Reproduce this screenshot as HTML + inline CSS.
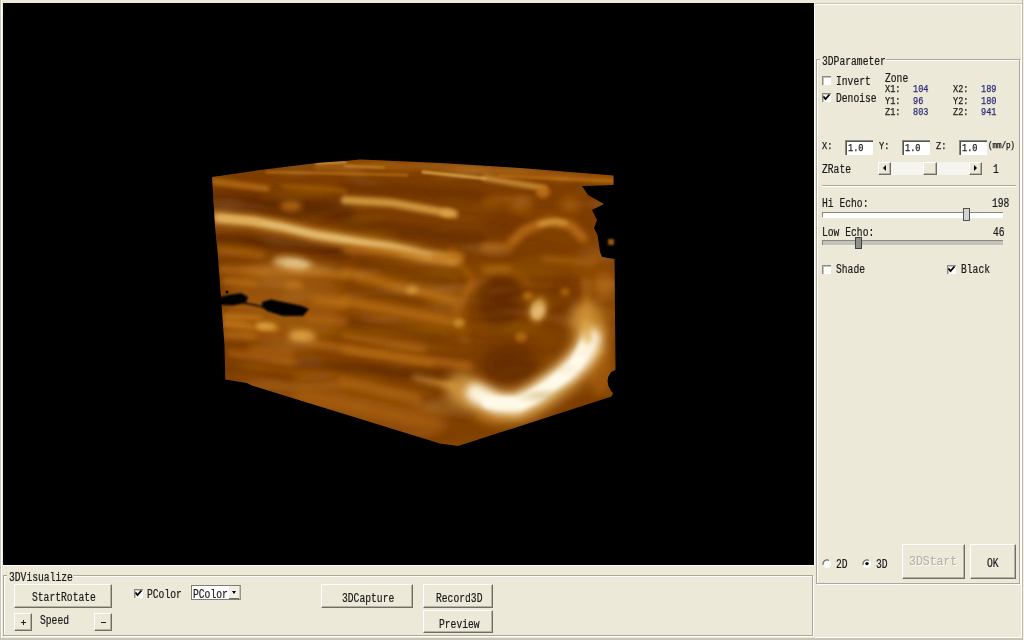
<!DOCTYPE html>
<html><head><meta charset="utf-8">
<style>
html,body{margin:0;padding:0;}
body{width:1024px;height:640px;position:relative;overflow:hidden;background:#ECE9D8;font-family:"Liberation Mono",monospace;color:#181818;}
.a{position:absolute;}
.t{position:absolute;font-size:12px;line-height:12px;white-space:nowrap;transform:scaleX(.806);transform-origin:0 0;-webkit-text-stroke:0.2px currentColor;}
.btn{position:absolute;background:#ECE9D8;border-top:1px solid #fff;border-left:1px solid #fff;border-right:1px solid #716F64;border-bottom:1px solid #716F64;box-shadow:inset -1px -1px 0 #B5B2A4;box-sizing:border-box;}
.cb{position:absolute;width:9px;height:9px;background:#fff;box-shadow:inset 1px 1px 0 #8c8a7e, inset 2px 2px 0 #c8c6ba;}
.edit{position:absolute;background:#fff;box-shadow:inset 1px 1px 0 #8c8a7e, inset 2px 2px 0 #55544c;box-sizing:border-box;}
.ts{position:absolute;font-size:10px;line-height:10px;white-space:nowrap;transform:scaleX(.86);transform-origin:0 0;-webkit-text-stroke:0.25px currentColor;}
</style></head><body>
<!-- window edges -->
<div class="a" style="left:0;top:0;width:1px;height:640px;background:#ACA899"></div>
<div class="a" style="left:1px;top:1px;width:1px;height:638px;background:#fff"></div>
<!-- black view -->
<div class="a" style="left:3px;top:3px;width:811px;height:562px;background:#000;overflow:hidden">
<svg width="811" height="562" viewBox="3 3 811 562" style="position:absolute;left:0;top:0">
  <defs>
    <filter id="texL" filterUnits="userSpaceOnUse" x="200" y="150" width="420" height="300">
      <feTurbulence type="fractalNoise" baseFrequency="0.012 0.05" numOctaves="2" seed="7"/>
      <feColorMatrix type="matrix" values="0 0 0 0 0.82  0 0 0 0 0.55  0 0 0 0 0.2  4 0 0 0 -2.2"/>
      <feGaussianBlur stdDeviation="2"/>
    </filter>
    <filter id="texD" filterUnits="userSpaceOnUse" x="200" y="150" width="420" height="300">
      <feTurbulence type="fractalNoise" baseFrequency="0.012 0.05" numOctaves="2" seed="7"/>
      <feColorMatrix type="matrix" values="0 0 0 0 0.35  0 0 0 0 0.15  0 0 0 0 0  -4 0 0 0 1.8"/>
      <feGaussianBlur stdDeviation="2"/>
    </filter>
    <filter id="b6" filterUnits="userSpaceOnUse" x="0" y="0" width="1024" height="640"><feGaussianBlur stdDeviation="6"/></filter>
    <filter id="b8" filterUnits="userSpaceOnUse" x="0" y="0" width="1024" height="640"><feGaussianBlur stdDeviation="8"/></filter>
    <filter id="b10" filterUnits="userSpaceOnUse" x="0" y="0" width="1024" height="640"><feGaussianBlur stdDeviation="10"/></filter>
    <filter id="soft" filterUnits="userSpaceOnUse" x="0" y="0" width="1024" height="640"><feGaussianBlur stdDeviation="0.7"/></filter>
    <filter id="b1" filterUnits="userSpaceOnUse" x="0" y="0" width="1024" height="640"><feGaussianBlur stdDeviation="1"/></filter>
    <filter id="b2" filterUnits="userSpaceOnUse" x="0" y="0" width="1024" height="640"><feGaussianBlur stdDeviation="2"/></filter>
    <filter id="b3" filterUnits="userSpaceOnUse" x="0" y="0" width="1024" height="640"><feGaussianBlur stdDeviation="3"/></filter>
    <filter id="b4" filterUnits="userSpaceOnUse" x="0" y="0" width="1024" height="640"><feGaussianBlur stdDeviation="4"/></filter>
    <filter id="b5" filterUnits="userSpaceOnUse" x="0" y="0" width="1024" height="640"><feGaussianBlur stdDeviation="5"/></filter>
    <clipPath id="blk"><path d="M212,177 L260,170 L317,163 L345,161 L360,159.5 L440,163 L520,168 L613.5,175.5 L613.5,185 L582,186 L588,195 L604,204 L592,210 L597,220 L594,228 L597.5,235 L600,252 L602,257 L614.5,259 L615.5,370 L611,372 Q604,381 611,391 L613,393 L611.6,396.6 L458,446 L440,443.5 L252,385.6 L247,383 L225.3,379.4 L224.5,345 L217.5,250 L215.3,230 L213.5,200 Z"/></clipPath>
  </defs>
  <g filter="url(#soft)"><g clip-path="url(#blk)">
    <rect x="200" y="150" width="420" height="300" fill="rgb(126,62,3)"/>
<ellipse cx="405" cy="300" rx="60" ry="45" fill="rgb(155,88,10)" opacity="0.7" filter="url(#b8)" transform="rotate(12 405 300)"/>
<ellipse cx="595" cy="300" rx="25" ry="60" fill="rgb(155,88,10)" opacity="0.5" filter="url(#b8)" transform="rotate(0 595 300)"/>
<ellipse cx="340" cy="395" rx="110" ry="30" fill="rgb(188,112,18)" opacity="0.35" filter="url(#b10)" transform="rotate(16 340 395)"/>
<path d="M300,395 L440,425" stroke="rgb(188,112,18)" stroke-width="10" fill="none" stroke-linecap="round" stroke-linejoin="round" opacity="0.5" filter="url(#b5)"/>
<path d="M216,202 L260,204 L300,207 L345,212" stroke="rgb(98,42,0)" stroke-width="20" fill="none" stroke-linecap="round" stroke-linejoin="round" opacity="1.0" filter="url(#b4)"/>
<path d="M345,186 L400,190 L480,196" stroke="rgb(98,42,0)" stroke-width="10" fill="none" stroke-linecap="round" stroke-linejoin="round" opacity="0.6" filter="url(#b4)"/>
<path d="M345,225 L420,232 L480,240" stroke="rgb(98,42,0)" stroke-width="12" fill="none" stroke-linecap="round" stroke-linejoin="round" opacity="0.75" filter="url(#b4)"/>
<path d="M218,239 L260,242 L300,247 L345,254" stroke="rgb(98,42,0)" stroke-width="10" fill="none" stroke-linecap="round" stroke-linejoin="round" opacity="1.0" filter="url(#b3)"/>
<path d="M360,262 L447,280" stroke="rgb(98,42,0)" stroke-width="10" fill="none" stroke-linecap="round" stroke-linejoin="round" opacity="0.6" filter="url(#b4)"/>
<path d="M345,288 L423,302" stroke="rgb(98,42,0)" stroke-width="8" fill="none" stroke-linecap="round" stroke-linejoin="round" opacity="0.55" filter="url(#b4)"/>
<path d="M345,320 L439,338" stroke="rgb(98,42,0)" stroke-width="9" fill="none" stroke-linecap="round" stroke-linejoin="round" opacity="0.55" filter="url(#b4)"/>
<path d="M345,370 L415,376" stroke="rgb(98,42,0)" stroke-width="9" fill="none" stroke-linecap="round" stroke-linejoin="round" opacity="0.5" filter="url(#b4)"/>
<path d="M225,285 L300,292" stroke="rgb(112,50,0)" stroke-width="8" fill="none" stroke-linecap="round" stroke-linejoin="round" opacity="0.6" filter="url(#b4)"/>
<path d="M225,355 L300,365" stroke="rgb(112,50,0)" stroke-width="8" fill="none" stroke-linecap="round" stroke-linejoin="round" opacity="0.5" filter="url(#b4)"/>
<ellipse cx="500" cy="300" rx="22" ry="28" fill="rgb(98,42,0)" opacity="0.85" filter="url(#b5)" transform="rotate(0 500 300)"/>
<ellipse cx="510" cy="365" rx="28" ry="22" fill="rgb(98,42,0)" opacity="0.7" filter="url(#b5)" transform="rotate(0 510 365)"/>
<ellipse cx="567" cy="295" rx="18" ry="22" fill="rgb(112,50,0)" opacity="0.55" filter="url(#b5)" transform="rotate(0 567 295)"/>
<ellipse cx="505" cy="225" rx="22" ry="14" fill="rgb(112,50,0)" opacity="0.5" filter="url(#b5)" transform="rotate(0 505 225)"/>
<path d="M318,166 L420,166 L613,180" stroke="rgb(188,112,18)" stroke-width="9" fill="none" stroke-linecap="round" stroke-linejoin="round" opacity="0.45" filter="url(#b2)"/>
<path d="M317,163 L345,162" stroke="rgb(222,165,70)" stroke-width="3" fill="none" stroke-linecap="round" stroke-linejoin="round" opacity="0.7" filter="url(#b1)"/>
<path d="M267,172 L407,175" stroke="rgb(188,112,18)" stroke-width="3" fill="none" stroke-linecap="round" stroke-linejoin="round" opacity="0.7" filter="url(#b1)"/>
<path d="M423,172 L485,178.5" stroke="rgb(222,165,70)" stroke-width="3" fill="none" stroke-linecap="round" stroke-linejoin="round" opacity="0.9" filter="url(#b1)"/>
<path d="M485,178 L544,188" stroke="rgb(222,165,70)" stroke-width="5" fill="none" stroke-linecap="round" stroke-linejoin="round" opacity="0.85" filter="url(#b2)"/>
<path d="M345,166 L384,167.5" stroke="rgb(222,165,70)" stroke-width="2" fill="none" stroke-linecap="round" stroke-linejoin="round" opacity="0.6" filter="url(#b1)"/>
<path d="M500,176 L613,181" stroke="rgb(188,112,18)" stroke-width="3" fill="none" stroke-linecap="round" stroke-linejoin="round" opacity="0.7" filter="url(#b1)"/>
<path d="M214,181.5 L267,188.6" stroke="rgb(188,112,18)" stroke-width="6" fill="none" stroke-linecap="round" stroke-linejoin="round" opacity="0.85" filter="url(#b2)"/>
<path d="M283,186 L345,191" stroke="rgb(188,112,18)" stroke-width="4" fill="none" stroke-linecap="round" stroke-linejoin="round" opacity="0.5" filter="url(#b2)"/>
<ellipse cx="291" cy="206" rx="11" ry="5" fill="rgb(188,112,18)" opacity="0.85" filter="url(#b3)" transform="rotate(0 291 206)"/>
<path d="M345,200 L392,203 L454,214" stroke="rgb(222,165,70)" stroke-width="8" fill="none" stroke-linecap="round" stroke-linejoin="round" opacity="0.85" filter="url(#b2)"/>
<ellipse cx="447" cy="213" rx="7" ry="4" fill="rgb(222,165,70)" opacity="0.8" filter="url(#b2)" transform="rotate(0 447 213)"/>
<path d="M216,218 L252,221 L283,227 L314,234.5 L345,239.5 L392,247 L423,255 L455,260" stroke="rgb(222,165,70)" stroke-width="12" fill="none" stroke-linecap="round" stroke-linejoin="round" opacity="0.9" filter="url(#b3)"/>
<path d="M220,218 L252,221 L283,227 L314,234.5 L345,239.5 L392,247 L430,256" stroke="rgb(235,205,140)" stroke-width="5" fill="none" stroke-linecap="round" stroke-linejoin="round" opacity="0.8" filter="url(#b2)"/>
<path d="M220,218 L260,222" stroke="rgb(222,165,70)" stroke-width="4" fill="none" stroke-linecap="round" stroke-linejoin="round" opacity="0.8" filter="url(#b2)"/>
<ellipse cx="293" cy="264" rx="20" ry="7" fill="rgb(225,195,135)" opacity="0.95" filter="url(#b3)" transform="rotate(8 293 264)"/>
<ellipse cx="295" cy="265" rx="12" ry="4" fill="rgb(240,225,180)" opacity="0.9" filter="url(#b2)" transform="rotate(8 295 265)"/>
<path d="M311,270 L345,275" stroke="rgb(188,112,18)" stroke-width="5" fill="none" stroke-linecap="round" stroke-linejoin="round" opacity="0.7" filter="url(#b3)"/>
<path d="M219,250 L262,255" stroke="rgb(188,112,18)" stroke-width="6" fill="none" stroke-linecap="round" stroke-linejoin="round" opacity="0.7" filter="url(#b3)"/>
<path d="M219,269 L267,273" stroke="rgb(188,112,18)" stroke-width="5" fill="none" stroke-linecap="round" stroke-linejoin="round" opacity="0.5" filter="url(#b3)"/>
<ellipse cx="294" cy="285" rx="9" ry="4" fill="rgb(188,112,18)" opacity="0.8" filter="url(#b3)" transform="rotate(0 294 285)"/>
<path d="M345,250 L392,251.5 L439,259 L462,256" stroke="rgb(188,112,18)" stroke-width="6" fill="none" stroke-linecap="round" stroke-linejoin="round" opacity="0.8" filter="url(#b3)"/>
<path d="M345,272 L407,289 L454,301" stroke="rgb(188,112,18)" stroke-width="7" fill="none" stroke-linecap="round" stroke-linejoin="round" opacity="0.85" filter="url(#b3)"/>
<ellipse cx="412" cy="290" rx="6" ry="4" fill="rgb(222,165,70)" opacity="0.6" filter="url(#b2)" transform="rotate(0 412 290)"/>
<path d="M345,301 L415,314 L460,323" stroke="rgb(188,112,18)" stroke-width="7" fill="none" stroke-linecap="round" stroke-linejoin="round" opacity="0.85" filter="url(#b3)"/>
<ellipse cx="459" cy="323" rx="5" ry="4" fill="rgb(222,165,70)" opacity="0.8" filter="url(#b2)" transform="rotate(0 459 323)"/>
<path d="M345,336 L423,350" stroke="rgb(188,112,18)" stroke-width="6" fill="none" stroke-linecap="round" stroke-linejoin="round" opacity="0.7" filter="url(#b3)"/>
<path d="M330,301 L345,304" stroke="rgb(188,112,18)" stroke-width="5" fill="none" stroke-linecap="round" stroke-linejoin="round" opacity="0.5" filter="url(#b3)"/>
<path d="M225,322 L245,324" stroke="rgb(188,112,18)" stroke-width="5" fill="none" stroke-linecap="round" stroke-linejoin="round" opacity="0.8" filter="url(#b2)"/>
<path d="M260,326 L274,329" stroke="rgb(188,112,18)" stroke-width="6" fill="none" stroke-linecap="round" stroke-linejoin="round" opacity="0.8" filter="url(#b2)"/>
<ellipse cx="301" cy="335" rx="10" ry="4" fill="rgb(222,165,70)" opacity="0.85" filter="url(#b3)" transform="rotate(8 301 335)"/>
<path d="M252,349 L291,352" stroke="rgb(188,112,18)" stroke-width="5" fill="none" stroke-linecap="round" stroke-linejoin="round" opacity="0.6" filter="url(#b3)"/>
<path d="M345,350 L392,357 L431,364" stroke="rgb(188,112,18)" stroke-width="6" fill="none" stroke-linecap="round" stroke-linejoin="round" opacity="0.7" filter="url(#b3)"/>
<path d="M415,376 L454,386" stroke="rgb(222,165,70)" stroke-width="7" fill="none" stroke-linecap="round" stroke-linejoin="round" opacity="0.75" filter="url(#b3)"/>
<path d="M451,250 L473,281 L454,312" stroke="rgb(188,112,18)" stroke-width="5" fill="none" stroke-linecap="round" stroke-linejoin="round" opacity="0.6" filter="url(#b3)"/>
<path d="M468,292 L478,280 L495,271 L515,272 L528,282" stroke="rgb(188,112,18)" stroke-width="6" fill="none" stroke-linecap="round" stroke-linejoin="round" opacity="0.5" filter="url(#b4)"/>
<path d="M462,300 L460,322 L466,342" stroke="rgb(188,112,18)" stroke-width="6" fill="none" stroke-linecap="round" stroke-linejoin="round" opacity="0.45" filter="url(#b4)"/>
<ellipse cx="538" cy="310" rx="6" ry="9" fill="rgb(255,250,232)" opacity="0.9" filter="url(#b2)" transform="rotate(15 538 310)"/>
<ellipse cx="538" cy="310" rx="9" ry="13" fill="rgb(222,165,70)" opacity="0.7" filter="url(#b3)" transform="rotate(15 538 310)"/>
<ellipse cx="528" cy="296" rx="5" ry="4" fill="rgb(188,112,18)" opacity="0.9" filter="url(#b2)" transform="rotate(0 528 296)"/>
<path d="M485,269 L508,269" stroke="rgb(188,112,18)" stroke-width="6" fill="none" stroke-linecap="round" stroke-linejoin="round" opacity="0.7" filter="url(#b3)"/>
<path d="M544,259 L594,262" stroke="rgb(188,112,18)" stroke-width="6" fill="none" stroke-linecap="round" stroke-linejoin="round" opacity="0.6" filter="url(#b3)"/>
<path d="M586,281 L587,312" stroke="rgb(188,112,18)" stroke-width="7" fill="none" stroke-linecap="round" stroke-linejoin="round" opacity="0.6" filter="url(#b3)"/>
<ellipse cx="604" cy="285" rx="10" ry="12" fill="rgb(188,112,18)" opacity="0.55" filter="url(#b4)" transform="rotate(0 604 285)"/>
<ellipse cx="565" cy="292" rx="5" ry="4" fill="rgb(188,112,18)" opacity="0.7" filter="url(#b2)" transform="rotate(0 565 292)"/>
<ellipse cx="521" cy="337" rx="6" ry="5" fill="rgb(188,112,18)" opacity="0.8" filter="url(#b2)" transform="rotate(0 521 337)"/>
<ellipse cx="543" cy="192" rx="7" ry="6" fill="rgb(188,112,18)" opacity="0.9" filter="url(#b2)" transform="rotate(0 543 192)"/>
<ellipse cx="520" cy="205" rx="12" ry="8" fill="rgb(188,112,18)" opacity="0.5" filter="url(#b4)" transform="rotate(0 520 205)"/>
<ellipse cx="570" cy="205" rx="10" ry="8" fill="rgb(188,112,18)" opacity="0.5" filter="url(#b4)" transform="rotate(0 570 205)"/>
<path d="M512,242 L525,230 L549,221 L570,225 L583,238" stroke="rgb(188,112,18)" stroke-width="9" fill="none" stroke-linecap="round" stroke-linejoin="round" opacity="0.9" filter="url(#b3)"/>
<path d="M540,224 L555,221 L565,223" stroke="rgb(222,165,70)" stroke-width="5" fill="none" stroke-linecap="round" stroke-linejoin="round" opacity="0.7" filter="url(#b2)"/>
<path d="M485,202 L508,199" stroke="rgb(188,112,18)" stroke-width="5" fill="none" stroke-linecap="round" stroke-linejoin="round" opacity="0.5" filter="url(#b3)"/>
<path d="M485,247 L508,247" stroke="rgb(188,112,18)" stroke-width="8" fill="none" stroke-linecap="round" stroke-linejoin="round" opacity="0.6" filter="url(#b3)"/>
<ellipse cx="600" cy="370" rx="14" ry="25" fill="rgb(188,112,18)" opacity="0.5" filter="url(#b5)" transform="rotate(0 600 370)"/>
<path d="M225,325 L276,328" stroke="rgb(188,112,18)" stroke-width="6" fill="none" stroke-linecap="round" stroke-linejoin="round" opacity="0.9" filter="url(#b2)"/>
<path d="M311,343 L393,356 L469,366" stroke="rgb(188,112,18)" stroke-width="7" fill="none" stroke-linecap="round" stroke-linejoin="round" opacity="0.75" filter="url(#b3)"/>
<path d="M230,353 L291,361" stroke="rgb(188,112,18)" stroke-width="6" fill="none" stroke-linecap="round" stroke-linejoin="round" opacity="0.7" filter="url(#b3)"/>
<path d="M342,381 L418,399" stroke="rgb(188,112,18)" stroke-width="8" fill="none" stroke-linecap="round" stroke-linejoin="round" opacity="0.6" filter="url(#b3)"/>
<path d="M304,363 L469,378" stroke="rgb(98,42,0)" stroke-width="8" fill="none" stroke-linecap="round" stroke-linejoin="round" opacity="0.7" filter="url(#b3)"/>
<path d="M225,368 L291,378" stroke="rgb(98,42,0)" stroke-width="7" fill="none" stroke-linecap="round" stroke-linejoin="round" opacity="0.55" filter="url(#b3)"/>
<path d="M240,340 L300,346" stroke="rgb(98,42,0)" stroke-width="5" fill="none" stroke-linecap="round" stroke-linejoin="round" opacity="0.5" filter="url(#b3)"/>
<ellipse cx="285" cy="305" rx="62" ry="44" fill="rgb(188,112,18)" opacity="0.45" filter="url(#b8)" transform="rotate(0 285 305)"/>
<path d="M225,281 L253,283" stroke="rgb(188,112,18)" stroke-width="7" fill="none" stroke-linecap="round" stroke-linejoin="round" opacity="0.85" filter="url(#b3)"/>
<path d="M222,270 L300,272 L345,276" stroke="rgb(188,112,18)" stroke-width="6" fill="none" stroke-linecap="round" stroke-linejoin="round" opacity="0.6" filter="url(#b3)"/>
<path d="M316,300 L345,303" stroke="rgb(188,112,18)" stroke-width="8" fill="none" stroke-linecap="round" stroke-linejoin="round" opacity="0.8" filter="url(#b3)"/>
<path d="M225,316 L260,318" stroke="rgb(188,112,18)" stroke-width="6" fill="none" stroke-linecap="round" stroke-linejoin="round" opacity="0.85" filter="url(#b2)"/>
<ellipse cx="266" cy="326" rx="10" ry="4" fill="rgb(222,165,70)" opacity="0.85" filter="url(#b2)" transform="rotate(0 266 326)"/>
<path d="M225,334 L253,336" stroke="rgb(188,112,18)" stroke-width="7" fill="none" stroke-linecap="round" stroke-linejoin="round" opacity="0.85" filter="url(#b3)"/>
<ellipse cx="302" cy="336" rx="14" ry="6" fill="rgb(222,165,70)" opacity="0.8" filter="url(#b3)" transform="rotate(0 302 336)"/>
<path d="M309,319 L345,322" stroke="rgb(188,112,18)" stroke-width="6" fill="none" stroke-linecap="round" stroke-linejoin="round" opacity="0.6" filter="url(#b3)"/>
<path d="M462,388 L478,398 L498,407 L516,407 L536,398 L554,385 L569,373 L580,361 L588,348 L591,335 L586,318" stroke="rgb(222,165,70)" stroke-width="32" fill="none" stroke-linecap="round" stroke-linejoin="round" opacity="0.75" filter="url(#b6)"/>
<ellipse cx="510" cy="412" rx="35" ry="8" fill="rgb(188,112,18)" opacity="0.6" filter="url(#b5)" transform="rotate(-10 510 412)"/>
<path d="M475,393 L497,404 L516,405 L535,396 L554,383 L569,371 L580,360 L588,349 L591,338" stroke="rgb(255,250,232)" stroke-width="19" fill="none" stroke-linecap="round" stroke-linejoin="round" opacity="1.0" filter="url(#b4)"/>
<path d="M488,402 L520,404 L548,388 L575,365 L586,345" stroke="rgb(255,250,232)" stroke-width="12" fill="none" stroke-linecap="round" stroke-linejoin="round" opacity="1.0" filter="url(#b2)"/>
<path d="M588,340 L586,322" stroke="rgb(222,165,70)" stroke-width="8" fill="none" stroke-linecap="round" stroke-linejoin="round" opacity="0.8" filter="url(#b3)"/>

    <rect x="200" y="150" width="420" height="300" filter="url(#texL)" opacity="0.18"/>
    <rect x="200" y="150" width="420" height="300" filter="url(#texD)" opacity="0.3"/>
  </g>
  <path d="M219,297 L228,295 L241,293 L248,297 L246,303 L233,305.5 L219,305 Z" fill="#000" filter="url(#b1)"/>
  <path d="M262,302 L271,299.5 L283,302 L302,306 L309,309 L303,316 L283,316 L267,311 L262,307 Z" fill="#000" filter="url(#b1)"/>
  <path d="M244,303 L264,307" stroke="#000" stroke-width="1.5" filter="url(#b1)"/>
  <circle cx="227" cy="292" r="1.5" fill="#000"/>
  <rect x="608" y="239" width="6" height="6" fill="rgb(150,85,12)" filter="url(#b1)"/>
  </g>
</svg>
</div>
<div class="a" style="left:814px;top:3px;width:1px;height:563px;background:#fff;"></div>
<div class="a" style="left:3px;top:565px;width:812px;height:1px;background:#fff;"></div>
<div class="a" style="left:0px;top:0px;width:1px;height:640px;background:#C8C5B5;"></div>
<div class="a" style="left:1px;top:0px;width:1px;height:640px;background:#fff;"></div>
<div class="a" style="left:0px;top:638px;width:1024px;height:2px;background:#C8C5B5;"></div>
<div class="a" style="left:1022px;top:0px;width:1px;height:640px;background:#C0BDAD;"></div>
<div class="a" style="left:1023px;top:0px;width:1px;height:640px;background:#F2F0E6;"></div>
<div class="a" style="left:1021px;top:3px;width:1px;height:635px;background:#fff;"></div>
<div class="a" style="left:815px;top:3px;width:207px;height:1px;background:#C8C5B5;"></div>
<div class="a" style="left:816px;top:4px;width:205px;height:1px;background:#fff;"></div>
<div class="a" style="left:815px;top:637px;width:207px;height:1px;background:#fff;"></div>
<div class="a" style="left:816px;top:59px;width:203px;height:1px;background:#ACA899;"></div>
<div class="a" style="left:816px;top:59px;width:1px;height:524px;background:#ACA899;"></div>
<div class="a" style="left:816px;top:583px;width:204px;height:1px;background:#ACA899;"></div>
<div class="a" style="left:1019px;top:59px;width:1px;height:525px;background:#ACA899;"></div>
<div class="a" style="left:817px;top:60px;width:202px;height:1px;background:#fff;"></div>
<div class="a" style="left:817px;top:60px;width:1px;height:523px;background:#fff;"></div>
<div class="a" style="left:817px;top:584px;width:204px;height:1px;background:#fff;"></div>
<div class="a" style="left:1020px;top:60px;width:1px;height:525px;background:#fff;"></div>
<div class="a" style="left:820px;top:54px;width:66px;height:12px;background:#ECE9D8;"></div>
<div class="t" style="left:822px;top:56px;">3DParameter</div>
<div class="cb" style="left:822px;top:76px"></div>
<div class="t" style="left:836px;top:76px;">Invert</div>
<div class="cb" style="left:822px;top:93px"><svg width="9" height="9" style="position:absolute;left:0;top:0"><path d="M1.5,3.5 L3.5,6 L7.5,1.5" stroke="#000" stroke-width="1.8" fill="none"/></svg></div>
<div class="t" style="left:836px;top:93px;">Denoise</div>
<div class="t" style="left:885px;top:73px;">Zone</div>
<div class="ts" style="left:885px;top:85px;">X1:</div>
<div class="ts" style="left:913px;top:85px;color:#2e2e78;">104</div>
<div class="ts" style="left:953px;top:85px;">X2:</div>
<div class="ts" style="left:981px;top:85px;color:#2e2e78;">189</div>
<div class="ts" style="left:885px;top:97px;">Y1:</div>
<div class="ts" style="left:913px;top:97px;color:#2e2e78;">96</div>
<div class="ts" style="left:953px;top:97px;">Y2:</div>
<div class="ts" style="left:981px;top:97px;color:#2e2e78;">180</div>
<div class="ts" style="left:885px;top:108px;">Z1:</div>
<div class="ts" style="left:913px;top:108px;color:#2e2e78;">803</div>
<div class="ts" style="left:953px;top:108px;">Z2:</div>
<div class="ts" style="left:981px;top:108px;color:#2e2e78;">941</div>
<div class="ts" style="left:822px;top:142px;">X:</div>
<div class="edit" style="left:845px;top:140px;width:28px;height:15px"></div>
<div class="ts" style="left:848px;top:144px;">1.0</div>
<div class="ts" style="left:879px;top:142px;">Y:</div>
<div class="edit" style="left:902px;top:140px;width:28px;height:15px"></div>
<div class="ts" style="left:905px;top:144px;">1.0</div>
<div class="ts" style="left:936px;top:142px;">Z:</div>
<div class="edit" style="left:959px;top:140px;width:28px;height:15px"></div>
<div class="ts" style="left:962px;top:144px;">1.0</div>
<div class="ts" style="left:988px;top:141px;font-size:9px;letter-spacing:-0.2px">(mm/p)</div>
<div class="t" style="left:822px;top:164px;">ZRate</div>
<div class="a" style="left:878px;top:162px;width:104px;height:13px;background:#F5F4EF;"></div>
<div class="btn" style="left:878px;top:162px;width:13px;height:13px"></div>
<div class="a" style="left:883px;top:165px;width:0;height:0;border-top:3.5px solid transparent;border-bottom:3.5px solid transparent;border-right:3.5px solid #000"></div>
<div class="btn" style="left:923px;top:162px;width:14px;height:13px"></div>
<div class="btn" style="left:969px;top:162px;width:13px;height:13px"></div>
<div class="a" style="left:974px;top:165px;width:0;height:0;border-top:3.5px solid transparent;border-bottom:3.5px solid transparent;border-left:3.5px solid #000"></div>
<div class="t" style="left:993px;top:164px;">1</div>
<div class="a" style="left:822px;top:185px;width:194px;height:1px;background:#ACA899;"></div>
<div class="a" style="left:822px;top:186px;width:194px;height:1px;background:#fff;"></div>
<div class="t" style="left:822px;top:198px;">Hi Echo:</div>
<div class="t" style="left:992px;top:198px;">198</div>
<div class="a" style="left:822px;top:212px;width:181px;height:1px;background:#8a887c;"></div>
<div class="a" style="left:822px;top:212px;width:1px;height:5px;background:#8a887c;"></div>
<div class="a" style="left:823px;top:213px;width:180px;height:5px;background:#fff;"></div>
<div class="a" style="left:963px;top:208px;width:7px;height:13px;background:#d2d2d0;border:1px solid #505050;box-sizing:border-box"></div>
<div class="t" style="left:822px;top:227px;">Low Echo:</div>
<div class="t" style="left:993px;top:227px;">46</div>
<div class="a" style="left:822px;top:240px;width:181px;height:1px;background:#8a887c;"></div>
<div class="a" style="left:822px;top:240px;width:1px;height:5px;background:#8a887c;"></div>
<div class="a" style="left:823px;top:241px;width:180px;height:4px;background:#c4c3bb;"></div>
<div class="a" style="left:855px;top:237px;width:7px;height:12px;background:#8f8f8c;border:1px solid #404040;box-sizing:border-box"></div>
<div class="cb" style="left:822px;top:265px"></div>
<div class="t" style="left:836px;top:264px;">Shade</div>
<div class="cb" style="left:947px;top:265px"><svg width="9" height="9" style="position:absolute;left:0;top:0"><path d="M1.5,3.5 L3.5,6 L7.5,1.5" stroke="#000" stroke-width="1.8" fill="none"/></svg></div>
<div class="t" style="left:961px;top:264px;">Black</div>
<svg class="a" style="left:822px;top:559px" width="10" height="10"><circle cx="5" cy="5" r="4" fill="#fff"/><path d="M1.2,6 A4,4 0 0 1 7,1.5" stroke="#6e6e68" stroke-width="1.2" fill="none"/></svg>
<div class="t" style="left:836px;top:559px;">2D</div>
<svg class="a" style="left:862px;top:559px" width="10" height="10"><circle cx="5" cy="5" r="4" fill="#fff"/><path d="M1.2,6 A4,4 0 0 1 7,1.5" stroke="#6e6e68" stroke-width="1.2" fill="none"/><circle cx="5" cy="4.6" r="1.7" fill="#000"/></svg>
<div class="t" style="left:876px;top:559px;">3D</div>
<div class="btn" style="left:902px;top:544px;width:63px;height:35px"></div>
<div class="t" style="left:909px;top:555px;font-size:13.5px;line-height:13px;transform:scaleX(.85);color:#b5b2a3;text-shadow:1px 1px 0 #fff">3DStart</div>
<div class="btn" style="left:970px;top:544px;width:46px;height:35px"></div>
<div class="t" style="left:987px;top:558px;">OK</div>
<div class="a" style="left:3px;top:575px;width:809px;height:1px;background:#ACA899;"></div>
<div class="a" style="left:3px;top:575px;width:1px;height:60px;background:#ACA899;"></div>
<div class="a" style="left:3px;top:635px;width:810px;height:1px;background:#ACA899;"></div>
<div class="a" style="left:812px;top:575px;width:1px;height:61px;background:#ACA899;"></div>
<div class="a" style="left:4px;top:576px;width:808px;height:1px;background:#fff;"></div>
<div class="a" style="left:4px;top:576px;width:1px;height:59px;background:#fff;"></div>
<div class="a" style="left:4px;top:636px;width:810px;height:1px;background:#fff;"></div>
<div class="a" style="left:813px;top:576px;width:1px;height:61px;background:#fff;"></div>
<div class="a" style="left:7px;top:570px;width:66px;height:12px;background:#ECE9D8;"></div>
<div class="t" style="left:9px;top:572px;">3DVisualize</div>
<div class="btn" style="left:14px;top:584px;width:98px;height:24px"></div>
<div class="t" style="left:32px;top:592px;">StartRotate</div>
<div class="btn" style="left:14px;top:613px;width:18px;height:18px"></div>
<div class="a" style="left:21px;top:622px;width:5px;height:1px;background:#202020;"></div>
<div class="a" style="left:23px;top:620px;width:1px;height:5px;background:#202020;"></div>
<div class="t" style="left:40px;top:615px;">Speed</div>
<div class="btn" style="left:94px;top:613px;width:18px;height:18px"></div>
<div class="a" style="left:101px;top:622px;width:5px;height:1px;background:#202020"></div>
<div class="cb" style="left:134px;top:589px"><svg width="9" height="9" style="position:absolute;left:0;top:0"><path d="M1.5,3.5 L3.5,6 L7.5,1.5" stroke="#000" stroke-width="1.8" fill="none"/></svg></div>
<div class="t" style="left:147px;top:589px;">PColor</div>
<div class="a" style="left:191px;top:585px;width:50px;height:15px;background:#fff;border:1px solid #7f7d72;border-right-color:#9a988c;box-sizing:border-box"></div>
<div class="t" style="left:193px;top:589px;">PColor</div>
<div class="a" style="left:229px;top:586px;width:11px;height:13px;background:#F0EEE6;"></div>
<div class="a" style="left:229px;top:598px;width:11px;height:1px;background:#716F64;"></div>
<div class="a" style="left:239px;top:586px;width:1px;height:13px;background:#c8c6bb;"></div>
<div class="a" style="left:232px;top:591px;width:0;height:0;border-left:2.5px solid transparent;border-right:2.5px solid transparent;border-top:3px solid #000"></div>
<div class="btn" style="left:321px;top:584px;width:92px;height:24px"></div>
<div class="t" style="left:342px;top:593px;">3DCapture</div>
<div class="btn" style="left:423px;top:584px;width:70px;height:24px"></div>
<div class="t" style="left:436px;top:593px;">Record3D</div>
<div class="btn" style="left:423px;top:610px;width:70px;height:23px"></div>
<div class="t" style="left:439px;top:619px;">Preview</div>

</body></html>
